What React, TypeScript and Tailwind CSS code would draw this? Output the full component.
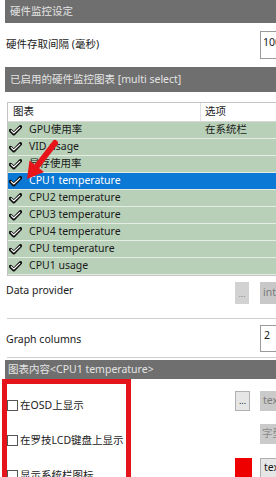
import React from "react";

const Check = () => (
  <svg width="13" height="11" viewBox="0 0 13 11" className="shrink-0">
    <path d="M1.5 5.5 L4.8 8.8 L11.5 1.8" fill="none" stroke="#111" strokeWidth="3.4" strokeLinecap="round" strokeLinejoin="round" />
    <path d="M2.2 5.6 L4.8 8 L10.8 2.3" fill="none" stroke="#fff" strokeWidth="1.1" strokeLinecap="round" strokeLinejoin="round" />
  </svg>
);

const rows: { name: string; opt?: string; sel?: boolean }[] = [
  { name: "GPU使用率", opt: "在系统栏" },
  { name: "VID usage" },
  { name: "显存使用率" },
  { name: "CPU1 temperature", sel: true },
  { name: "CPU2 temperature" },
  { name: "CPU3 temperature" },
  { name: "CPU4 temperature" },
  { name: "CPU temperature" },
  { name: "CPU1 usage" },
];

export default function App() {
  return (
    <div
      className="relative w-[276px] h-[477px] overflow-hidden bg-white text-[10.5px] text-[#1a1a1a] whitespace-nowrap"
      style={{ fontFamily: '"Noto Sans", "Noto Sans CJK SC", sans-serif' }}
    >
      <div className="w-[300px] flex flex-col">
        <div className="ml-[5px] h-[23px] bg-[#6f6f6f] text-[#e4e4e4] pl-[5px] flex items-center">硬件监控设定</div>
        <div className="h-[44px] flex items-center pl-[6px]">
          <div className="flex-1">硬件存取间隔 (毫秒)</div>
          <div className="w-[40px] h-[28px] border border-[#9a9a9a] pl-[2px] pt-[3px] leading-[14px] overflow-hidden">100</div>
        </div>
        <div className="ml-[5px] h-[25px] bg-[#6f6f6f] text-[#e4e4e4] pl-[5px] flex items-center">已启用的硬件监控图表 [multi select]</div>
        <div className="h-[10px]" />
        <div className="ml-[7px] border-t border-l border-b border-[#c4c4c4] flex flex-col">
          <div className="h-[19px] flex items-center bg-white border-b border-[#d8d8d8]">
            <div className="w-[193px] pl-[5px] border-r border-[#e0e0e0] h-full flex items-center">图表</div>
            <div className="pl-[4px]">选项</div>
          </div>
          {rows.map((r, i) => (
            <div
              key={i}
              className={
                "h-[17px] flex items-center border-b border-[#e4ece4] " +
                (r.sel ? "bg-[#0a78d4] text-white" : "bg-[#b8d0b8]")
              }
            >
              <div className="w-[193px] flex items-center">
                <div className="w-[21px] pl-[1px] flex items-center">
                  <Check />
                </div>
                <span>{r.name}</span>
              </div>
              <div className="pl-[4px]">{r.opt ?? ""}</div>
            </div>
          ))}
        </div>
        <div className="h-[42px] flex items-start pt-[6px] pl-[6px]">
          <div className="flex-1 leading-[14px] pt-[1px]">Data provider</div>
          <div className="w-[14px] h-[22px] bg-[#d2d2d2] text-[#8a8a8a] text-[9px] flex items-end justify-center pb-[4px]">...</div>
          <div className="w-[40px] h-[22px] ml-[11px] bg-[#c8c8c8] text-[#7a7a7a] pl-[3px] flex items-center overflow-hidden">internal</div>
        </div>
        <div className="ml-[7px] h-px bg-[#cfcfcf]" />
        <div className="h-[38px] flex items-center pl-[6px]">
          <div className="flex-1 pt-[4px]">Graph columns</div>
          <div className="w-[40px] h-[27px] border border-[#9a9a9a] pl-[3px] pt-[2px] leading-[14px]">2</div>
        </div>
        <div className="ml-[7px] h-px bg-[#cfcfcf]" />
        <div className="h-[2px]" />
        <div className="ml-[5px] h-[19px] bg-[#6f6f6f] text-[#e4e4e4] pl-[3px] flex items-center">图表内容&lt;CPU1 temperature&gt;</div>
        <div className="flex">
          <div className="ml-[2px] w-[129px] h-[110px] border-[5px] border-b-0 border-[#e4141a] flex flex-col">
            <div className="h-[28px] mt-[8px] flex items-center gap-[2px]">
              <div className="w-[11px] h-[11px] border border-[#555] bg-white shrink-0" />
              <span>在OSD上显示</span>
            </div>
            <div className="h-[28px] mt-[8px] flex items-center gap-[2px]">
              <div className="w-[11px] h-[11px] border border-[#555] bg-white shrink-0" />
              <span>在罗技LCD键盘上显示</span>
            </div>
            <div className="h-[28px] mt-[8px] flex items-center gap-[2px]">
              <div className="w-[11px] h-[11px] border border-[#555] bg-white shrink-0" />
              <span>显示系统栏图标</span>
            </div>
          </div>
          <div className="flex-1 flex flex-col items-end">
            <div className="h-[20px] mt-[12px] flex">
              <div className="w-[15px] h-[20px] border border-[#b0b0b0] bg-[#e6e6e6] text-[9px] flex items-end justify-center pb-[3px]">...</div>
              <div className="w-[40px] h-[20px] ml-[10px] bg-[#cacaca] text-[#7a7a7a] pl-[3px] flex items-center">text</div>
            </div>
            <div className="h-[20px] mt-[13px] flex">
              <div className="w-[40px] h-[20px] bg-[#cacaca] text-[#8a8a8a] pl-[2px] flex items-center">字型</div>
            </div>
            <div className="h-[20px] mt-[14px] flex">
              <div className="w-[17px] h-[20px] bg-[#ee0000]" />
              <div className="w-[40px] h-[20px] ml-[8px] border border-[#b0b0b0] bg-[#e6e6e6] pl-[3px] flex items-center">text</div>
            </div>
          </div>
        </div>
      </div>
      <svg className="absolute left-0 top-0 pointer-events-none" width="80" height="200" viewBox="0 0 80 200">
        <path d="M55 143 L38 165" stroke="#e8141a" strokeWidth="6" strokeLinecap="round" />
        <polygon points="27,179 29.5,160.5 44,172" fill="#e8141a" />
      </svg>
    </div>
  );
}
